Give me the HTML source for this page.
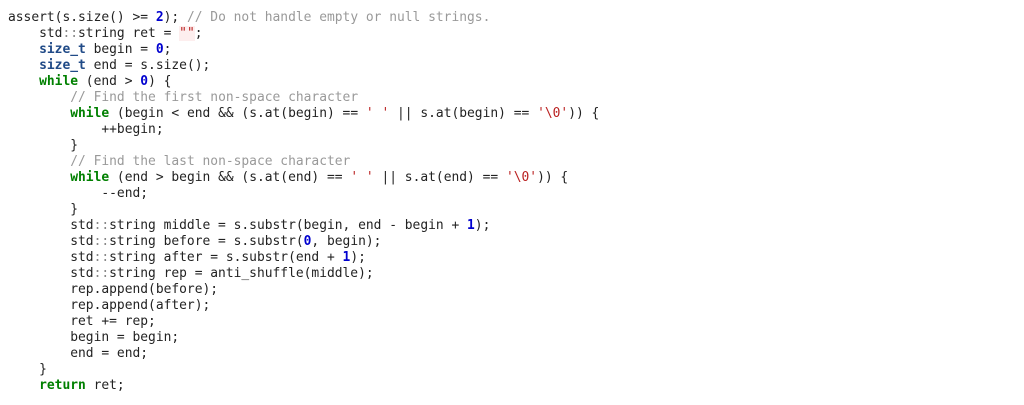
<!DOCTYPE html><html><head><style>
body{margin:0;background:#fff;width:1024px;height:405px;overflow:hidden}
pre{margin:0;position:absolute;left:8px;top:10px;font-family:"DejaVu Sans Mono","Liberation Mono",monospace;font-size:12.93px;line-height:16px;color:#222}
.k{color:#008000;font-weight:bold}.t{color:#204a87;font-weight:bold}.n{color:#0000cf;font-weight:bold}.c{color:#999}.o{color:#888}.s{color:#ba2121}.e{color:#ba2121;background:#fdeeee}
</style></head><body><pre>assert(s.size() &gt;= <span class="n">2</span>); <span class="c">// Do not handle empty or null strings.</span>
    std<span class="o">::</span>string ret = <span class="e">""</span>;
    <span class="t">size_t</span> begin = <span class="n">0</span>;
    <span class="t">size_t</span> end = s.size();
    <span class="k">while</span> (end &gt; <span class="n">0</span>) {
        <span class="c">// Find the first non-space character</span>
        <span class="k">while</span> (begin &lt; end &amp;&amp; (s.at(begin) == <span class="s">' '</span> || s.at(begin) == <span class="s">'\0'</span>)) {
            ++begin;
        }
        <span class="c">// Find the last non-space character</span>
        <span class="k">while</span> (end &gt; begin &amp;&amp; (s.at(end) == <span class="s">' '</span> || s.at(end) == <span class="s">'\0'</span>)) {
            --end;
        }
        std<span class="o">::</span>string middle = s.substr(begin, end - begin + <span class="n">1</span>);
        std<span class="o">::</span>string before = s.substr(<span class="n">0</span>, begin);
        std<span class="o">::</span>string after = s.substr(end + <span class="n">1</span>);
        std<span class="o">::</span>string rep = anti_shuffle(middle);
        rep.append(before);
        rep.append(after);
        ret += rep;
        begin = begin;
        end = end;
    }
    <span class="k">return</span> ret;</pre></body></html>
